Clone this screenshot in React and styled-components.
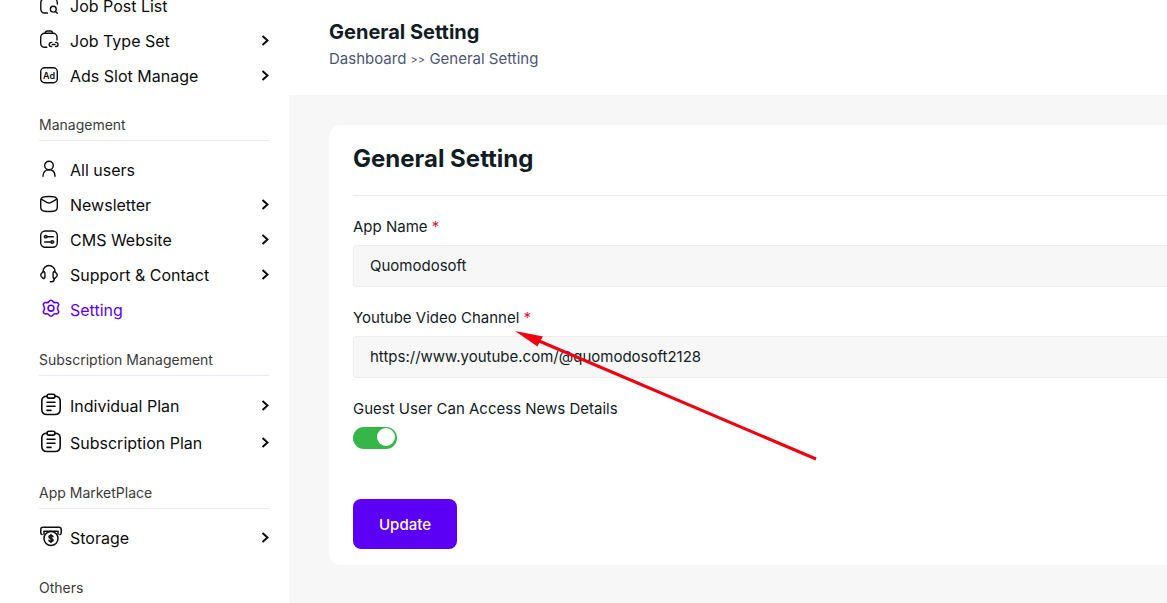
import React, { useState } from 'react';
import styled, { createGlobalStyle, css } from 'styled-components';

const GlobalStyle = createGlobalStyle`
  *, *::before, *::after {
    box-sizing: border-box;
  }

  body {
    margin: 0;
    background: #ffffff;
    font-family: Inter, 'Liberation Sans', sans-serif;
    color: #111c24;
  }

  button, input {
    font-family: inherit;
  }
`;

const Layout = styled.div`
  display: flex;
  height: 100vh;
  overflow: hidden;
`;

const Sidebar = styled.aside`
  flex: 0 0 289px;
  padding: 0 20px 0 39px;
  overflow: hidden;
`;

const Nav = styled.nav`
  display: flex;
  flex-direction: column;
  gap: 22px;
  margin-top: -12px;
`;

const SectionTitle = styled.h2`
  margin: 0 0 11px;
  padding-bottom: 5px;
  border-bottom: 1px solid #ebe8fb;
  color: #3b3b3b;
  font-size: 14px;
  font-weight: 400;
  line-height: 20px;
`;

const MenuList = styled.ul`
  margin: 0;
  padding: 0;
  list-style: none;
`;

const rowHeights = {
  small: 35,
  medium: 36,
  large: 37
};

const MenuLink = styled.a`
  display: flex;
  align-items: center;
  height: ${props => rowHeights[props.$size]}px;
  color: ${props => (props.$active ? '#5b00f5' : '#0c0c0c')};
  font-size: 16px;
  line-height: 24px;
  text-decoration: none;
  white-space: nowrap;
`;

const IconBox = styled.span`
  flex: 0 0 31px;
  display: flex;
  align-items: center;
  height: 28px;
  padding-bottom: 2px;

  svg {
    flex: none;
    overflow: visible;
    fill: none;
    stroke: currentColor;
    stroke-linecap: round;
    stroke-linejoin: round;
  }
`;

const MenuLabel = styled.span`
  flex: 1;
`;

const Chevron = styled.svg`
  width: 8px;
  height: 12px;
  fill: none;
  stroke: #0c0c0c;
  stroke-width: 2;
`;

const Main = styled.main`
  flex: 1;
  min-width: 0;
  background: #f7f7f7;
`;

const PageHeader = styled.header`
  height: 95px;
  padding: 18px 40px 0;
  background: #ffffff;
`;

const PageTitle = styled.h1`
  margin: 0 0 1px;
  font-size: 20px;
  font-weight: 700;
  line-height: 28px;
`;

const Breadcrumb = styled.div`
  color: #4c5672;
  font-size: 15px;
  line-height: 24px;

  a {
    color: inherit;
    text-decoration: none;
  }
`;

const Separator = styled.span`
  font-size: 11px;
`;

const Content = styled.div`
  padding: 30px 0 0 40px;
`;

const Card = styled.section`
  position: relative;
  padding: 16px 0 16px 24px;
  border-radius: 12px 0 0 12px;
  background: #ffffff;
`;

const CardTitle = styled.h2`
  margin: 0 0 19px;
  padding-bottom: 18px;
  border-bottom: 1px solid #ececec;
  font-size: 24px;
  font-weight: 700;
  line-height: 36px;
`;

const Form = styled.form`
  display: flex;
  flex-direction: column;
  gap: 19px;
`;

const Field = styled.div`
  display: flex;
  flex-direction: column;
  align-items: flex-start;
  gap: 6px;
`;

const Label = styled.label`
  font-size: 15px;
  line-height: 24px;
`;

const Required = styled.span`
  color: #e0123a;
`;

const TextInput = styled.input`
  width: 100%;
  height: 42px;
  padding: 0 16px 2px;
  border: 1px solid #ececec;
  border-right: 0;
  border-radius: 4px 0 0 4px;
  outline: none;
  background: #f7f7f7;
  color: #111c24;
  font-size: 15px;
`;

const Toggle = styled.input`
  appearance: none;
  display: flex;
  width: 44px;
  height: 22px;
  margin: 0;
  padding: 1px 2px;
  border-radius: 11px;
  background: #c9ccd1;
  cursor: pointer;

  &::before {
    content: '';
    width: 18px;
    height: 18px;
    border-radius: 50%;
    background: #ffffff;
  }

  ${props => props.checked && css`
    justify-content: flex-end;
    background: #34b748;
  `}
`;

const SubmitButton = styled.button`
  align-self: flex-start;
  height: 50px;
  margin-top: 31px;
  padding: 0 26px;
  border: 0;
  border-radius: 8px;
  background: #5b00f5;
  color: #ffffff;
  font-size: 15px;
  font-weight: 500;
  cursor: pointer;
`;

const Pointer = styled.svg`
  position: absolute;
  top: 206px;
  left: 186px;
  width: 304px;
  height: 132px;
  pointer-events: none;
`;

const SearchListIcon = () => (
  <svg width="20" height="20" viewBox="0 0 20 20" strokeWidth="1.4">
    <path d="M6.5 3.5V3a2 2 0 0 1 2-2h3a2 2 0 0 1 2 2v.5" />
    <path d="M8.5 18H5.5A3.7 3.7 0 0 1 1.8 14.3V7.5a4 4 0 0 1 4-4h8.500a4 4 0 0 1 4 4V9" />
    <circle cx="14.300" cy="14.200" r="2.900" />
    <path d="M16.500 16.400L18.300 18.300" />
  </svg>
);

const LinkBagIcon = () => (
  <svg width="20" height="20" viewBox="0 0 20 20" strokeWidth="1.4">
    <path d="M6.300 3.200V3a2 2 0 0 1 2-2h3.200a2 2 0 0 1 2 2v.2" />
    <path d="M7.800 17.300H5.500A3.800 3.800 0 0 1 1.700 13.500V7.200a4 4 0 0 1 4-4h8.300a4 4 0 0 1 4 4V10" />
    <path d="M12.700 12.400h-.5a2 2 0 0 0 0 4.100h.5M16.500 12.400h.5a2 2 0 0 1 0 4.100h-.5M13.200 14.450h2.800" />
  </svg>
);

const AdIcon = () => (
  <svg width="20" height="20" viewBox="0 0 20 20" strokeWidth="1.4">
    <rect x="1.700" y="2.700" width="16.600" height="15" rx="4" />
    <text
      x="10"
      y="13.500"
      textAnchor="middle"
      fontSize="9"
      fontWeight="600"
      fill="currentColor"
      stroke="none"
    >
      Ad
    </text>
  </svg>
);

const UserIcon = () => (
  <svg width="20" height="20" viewBox="0 0 20 20" strokeWidth="1.4">
    <circle cx="10" cy="6.500" r="4.300" />
    <path d="M4 17.300c0-4 2.300-6.500 6-6.500s6 2.500 6 6.500" />
  </svg>
);

const MailIcon = () => (
  <svg width="20" height="20" viewBox="0 0 20 20" strokeWidth="1.4">
    <path d="M1.700 7c0-2.800 1.200-4 4-4.200 2.800-.3 5.800-.3 8.600 0 2.800.2 4 1.400 4 4.200v6c0 2.800-1.200 4-4 4.200-2.800.3-5.800.3-8.600 0-2.800-.2-4-1.400-4-4.200z" />
    <path d="M2.200 5.200l5.600 3.100c1.400.8 3 .8 4.400 0l5.600-3.100" />
  </svg>
);

const SlidersIcon = () => (
  <svg width="20" height="20" viewBox="0 0 20 20" strokeWidth="1.4">
    <rect x="1.700" y="2" width="16.600" height="16.300" rx="4.500" />
    <circle cx="6.800" cy="7.700" r="1.200" />
    <path d="M8.300 7.700h6M5.200 7.700h.3M5.700 13h6M14.600 13h.3" />
    <circle cx="13.200" cy="13" r="1.200" />
  </svg>
);

const HeadsetIcon = () => (
  <svg width="20" height="20" viewBox="0 0 20 20" strokeWidth="1.4">
    <path d="M4 8V7.500a6 6 0 0 1 12 0V8" />
    <path d="M5.900 9.500c0-2-1-2.300-2-1.400-1.200.8-2.200 1.600-2.200 3s1 2.200 2.200 3c1 .8 2 .5 2-1.400z" />
    <path d="M14.100 9.500c0-2 1-2.300 2-1.400 1.200.8 2.200 1.600 2.200 3s-1 2.200-2.200 3c-1 .8-2 .5-2-1.400z" />
    <path d="M15.300 14.500c0 2-1 3.200-2.800 3.200h-1.200" />
  </svg>
);

const GearIcon = () => (
  <svg width="24" height="24" viewBox="0 0 24 24" strokeWidth="1.6">
    <path d="M12 3.200c.9 0 1.500.5 2 1.300.5.900 1.500 1.300 2.500 1.100 1.300-.2 2.300 0 2.900 1 .5.900.4 1.700-.2 2.500-.5.700-.7 1.100-.7 2.100s.2 1.500.7 2.200c.6.800.7 1.600.2 2.400-.6 1-1.600 1.200-2.900 1-1-.2-2 .2-2.500 1.100-.5.800-1.100 1.400-2 1.400s-1.500-.6-2-1.400c-.5-.9-1.500-1.300-2.500-1.100-1.300.2-2.300 0-2.900-1-.5-.8-.4-1.600.2-2.400.5-.7.700-1.200.7-2.200s-.2-1.400-.7-2.100c-.6-.8-.7-1.600-.2-2.500.6-1 1.600-1.200 2.900-1 1 .2 2-.2 2.500-1.100.5-.8 1.100-1.300 2-1.300z" />
    <circle cx="12" cy="11.200" r="2.900" />
  </svg>
);

const ClipboardIcon = () => (
  <svg width="24" height="24" viewBox="0 0 24 24" strokeWidth="1.6">
    <path d="M8 3.300c-3.600 0-5.200 1.500-5.200 5v8c0 3.700 1.500 5.200 5.200 5.200h8c3.700 0 5.200-1.500 5.200-5.200v-8c0-3.500-1.600-5-5.200-5" />
    <rect x="8" y="1.200" width="8" height="3.900" rx="1.950" />
    <path d="M8 9.200h8M8 13.300h8M8 17.400h4" />
  </svg>
);

const StorageIcon = () => (
  <svg width="24" height="24" viewBox="0 0 24 24" strokeWidth="1.5">
    <path d="M3 9.500C2.200 9.300 1.800 8.800 1.800 8V4.500C1.800 3 2.500 2.300 4 2.300h16c1.500 0 2.200.7 2.200 2.200V8c0 .8-.4 1.300-1.200 1.500M5.500 6.200h13M5 6.200v3M19 6.200v3" />
    <circle cx="12" cy="13.500" r="7" />
    <path d="M14 11.800c-.2-.9-.9-1.300-2-1.300s-2 .5-2 1.500 .8 1.300 2 1.500 2 .6 2 1.600-.8 1.500-2 1.500-1.900-.4-2-1.300M12 9.500v8" />
  </svg>
);

const sections = [
  {
    items: [
      { label: 'Job Post List', icon: SearchListIcon },
      { label: 'Job Type Set', icon: LinkBagIcon, expandable: true },
      { label: 'Ads Slot Manage', icon: AdIcon, expandable: true }
    ]
  },
  {
    title: 'Management',
    items: [
      { label: 'All users', icon: UserIcon },
      { label: 'Newsletter', icon: MailIcon, expandable: true },
      { label: 'CMS Website', icon: SlidersIcon, expandable: true },
      { label: 'Support & Contact', icon: HeadsetIcon, expandable: true },
      { label: 'Setting', icon: GearIcon, active: true, size: 'medium' }
    ]
  },
  {
    title: 'Subscription Management',
    items: [
      { label: 'Individual Plan', icon: ClipboardIcon, expandable: true, size: 'large' },
      { label: 'Subscription Plan', icon: ClipboardIcon, expandable: true, size: 'large' }
    ]
  },
  {
    title: 'App MarketPlace',
    items: [{ label: 'Storage', icon: StorageIcon, expandable: true, size: 'medium' }]
  },
  { title: 'Others', items: [] }
];

const MenuItem = ({ item }) => {
  const Icon = item.icon;

  return (
    <li>
      <MenuLink href="#" $active={item.active} $size={item.size || 'small'}>
        <IconBox>
          <Icon />
        </IconBox>
        <MenuLabel>{item.label}</MenuLabel>
        {item.expandable && (
          <Chevron viewBox="0 0 8 12">
            <path d="M1.500 1L6.500 5.500L1.500 10" />
          </Chevron>
        )}
      </MenuLink>
    </li>
  );
};

const App = () => {
  const [appName, setAppName] = useState('Quomodosoft');
  const [channel, setChannel] = useState('https://www.youtube.com/@quomodosoft2128');
  const [guestAccess, setGuestAccess] = useState(true);

  return (
    <Layout>
      <GlobalStyle />
      <Sidebar>
        <Nav>
          {sections.map((section, index) => (
            <div key={index}>
              {section.title && <SectionTitle>{section.title}</SectionTitle>}
              <MenuList>
                {section.items.map(item => (
                  <MenuItem key={item.label} item={item} />
                ))}
              </MenuList>
            </div>
          ))}
        </Nav>
      </Sidebar>

      <Main>
        <PageHeader>
          <PageTitle>General Setting</PageTitle>
          <Breadcrumb>
            <a href="#">Dashboard</a> <Separator>&gt;&gt;</Separator> General Setting
          </Breadcrumb>
        </PageHeader>

        <Content>
          <Card>
            <CardTitle>General Setting</CardTitle>
            <Form onSubmit={e => e.preventDefault()}>
              <Field>
                <Label htmlFor="app-name">
                  App Name <Required>*</Required>
                </Label>
                <TextInput
                  id="app-name"
                  type="text"
                  value={appName}
                  onChange={e => setAppName(e.target.value)}
                />
              </Field>
              <Field>
                <Label htmlFor="channel">
                  Youtube Video Channel <Required>*</Required>
                </Label>
                <TextInput
                  id="channel"
                  type="text"
                  value={channel}
                  onChange={e => setChannel(e.target.value)}
                />
              </Field>
              <Field>
                <Label htmlFor="guest-access">Guest User Can Access News Details</Label>
                <Toggle
                  id="guest-access"
                  type="checkbox"
                  checked={guestAccess}
                  onChange={e => setGuestAccess(e.target.checked)}
                />
              </Field>
              <SubmitButton type="submit">Update</SubmitButton>
            </Form>
            <Pointer viewBox="0 0 304 132">
              <path d="M24 10L301 128" stroke="#ee0010" strokeWidth="3" />
              <path d="M0 0L28 5.500L25 10L22.500 15.500Z" fill="#ee0010" />
            </Pointer>
          </Card>
        </Content>
      </Main>
    </Layout>
  );
};

export default App;
